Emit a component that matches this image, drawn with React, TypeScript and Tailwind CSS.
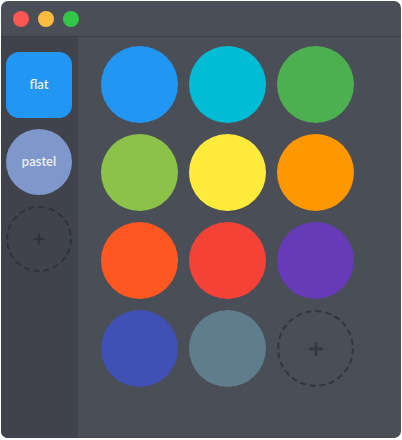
import { Plus } from "lucide-react";

const colors = [
  "#2196f3",
  "#00bcd4",
  "#4caf50",
  "#8bc34a",
  "#ffeb3b",
  "#ff9800",
  "#ff5722",
  "#f44336",
  "#673ab7",
  "#3f51b5",
  "#607d8b",
];

export default function App() {
  return (
    <div className="h-[440px] w-[402px] bg-white pl-px pt-px font-['Lato','Liberation_Sans',sans-serif]">
      <div className="flex h-[437px] w-[400px] flex-col overflow-hidden rounded-[7px] bg-[#4a4e57]">
        {/* title bar */}
        <div className="flex h-9 shrink-0 items-center gap-[9px] border-b border-[#3b3e45] pl-3">
          <div className="h-4 w-4 rounded-full bg-[#fc5753]" />
          <div className="h-4 w-4 rounded-full bg-[#fdbc40]" />
          <div className="h-4 w-4 rounded-full bg-[#33c748]" />
        </div>

        <div className="flex flex-1">
          {/* sidebar */}
          <aside className="flex w-[77px] flex-col items-start gap-[11px] bg-[#40434b] pl-[5px] pt-[15px]">
            <button className="flex h-[66px] w-[66px] items-center justify-center rounded-[13px] bg-[#2196f3] text-[13px] font-semibold text-[#e8f1fc]">
              flat
            </button>
            <button className="flex h-[66px] w-[66px] items-center justify-center rounded-full bg-[#7f97cb] text-[13px] font-semibold text-[#eef1f8]">
              pastel
            </button>
            <button className="flex h-[66px] w-[66px] items-center justify-center rounded-full border-2 border-dashed border-[#2f3238] text-[#30333a]">
              <Plus className="h-4 w-4" strokeWidth={3.5} />
            </button>
          </aside>

          {/* palette */}
          <main className="flex-1 pl-[23px] pt-[9px]">
            <div className="grid grid-cols-[repeat(3,77px)] gap-[11px]">
              {colors.map((c) => (
                <div
                  key={c}
                  className="h-[77px] w-[77px] rounded-full"
                  style={{ backgroundColor: c }}
                />
              ))}
              <button className="flex h-[77px] w-[77px] items-center justify-center rounded-full border-2 border-dashed border-[#33363c] text-[#35383f]">
                <Plus className="h-5 w-5" strokeWidth={3.5} />
              </button>
            </div>
          </main>
        </div>
      </div>
    </div>
  );
}
